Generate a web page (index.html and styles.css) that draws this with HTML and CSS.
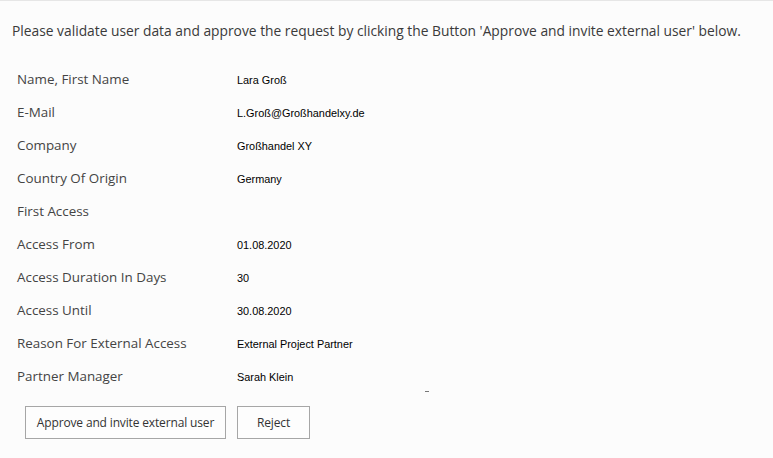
FILE: index.html
```html
<!DOCTYPE html>
<html lang="en">
<head>
  <meta charset="UTF-8" />
  <title>Approve External User</title>
  <link rel="stylesheet" href="styles.css">
</head>
<body>
  <div class="page">
    <p class="intro">Please validate user data and approve the request by clicking the Button 'Approve and invite external user' below.</p>
    <div class="details">
      <div class="label">Name, First Name</div><div class="value">Lara Groß</div>
      <div class="label">E-Mail</div><div class="value">L.Groß@Großhandelxy.de</div>
      <div class="label">Company</div><div class="value">Großhandel XY</div>
      <div class="label">Country Of Origin</div><div class="value">Germany</div>
      <div class="label">First Access</div><div class="value"></div>
      <div class="label">Access From</div><div class="value">01.08.2020</div>
      <div class="label">Access Duration In Days</div><div class="value">30</div>
      <div class="label">Access Until</div><div class="value">30.08.2020</div>
      <div class="label">Reason For External Access</div><div class="value">External Project Partner</div>
      <div class="label">Partner Manager</div><div class="value">Sarah Klein<span class="mark"></span></div>
    </div>
    <div class="actions">
      <button class="btn btn-approve">Approve and invite external user</button>
      <button class="btn btn-reject">Reject</button>
    </div>
  </div>
</body>
</html>
```

FILE: styles.css
```css
html, body {
  margin: 0;
  padding: 0;
  background: #fcfcfc;
}
.page {
  font-family: 'Open Sans', 'Noto Sans', sans-serif;
  color: #404040;
  padding-top: 20px;
  border-top: 1px solid #e6e6e6;
}
.intro {
  margin: 0 0 21px 12px;
  font-size: 13.8px;
  line-height: 20px;
  color: #3a3a3a;
}
.details {
  display: grid;
  grid-template-columns: 220px 1fr;
  grid-auto-rows: 33px;
  margin-left: 17px;
  align-items: center;
}
.label {
  font-size: 13.4px;
  color: #444;
}
.value {
  position: relative;
  font-family: 'Liberation Sans', Arial, sans-serif;
  font-size: 10.9px;
  color: #000;
  padding-top: 2px;
}
.mark {
  position: absolute;
  left: 188px;
  top: 22px;
  width: 4px;
  height: 1px;
  background: #777;
}
.actions {
  display: flex;
  gap: 11px;
  margin: 14px 0 0 25px;
}
.btn {
  font-family: 'Open Sans', 'Noto Sans', sans-serif;
  font-size: 12px;
  letter-spacing: -0.15px;
  color: #333;
  background: #fdfdfd;
  border: 1px solid #a6a6a6;
  height: 33px;
  padding: 0;
}
.btn-approve {
  width: 201px;
}
.btn-reject {
  width: 73px;
}
```
